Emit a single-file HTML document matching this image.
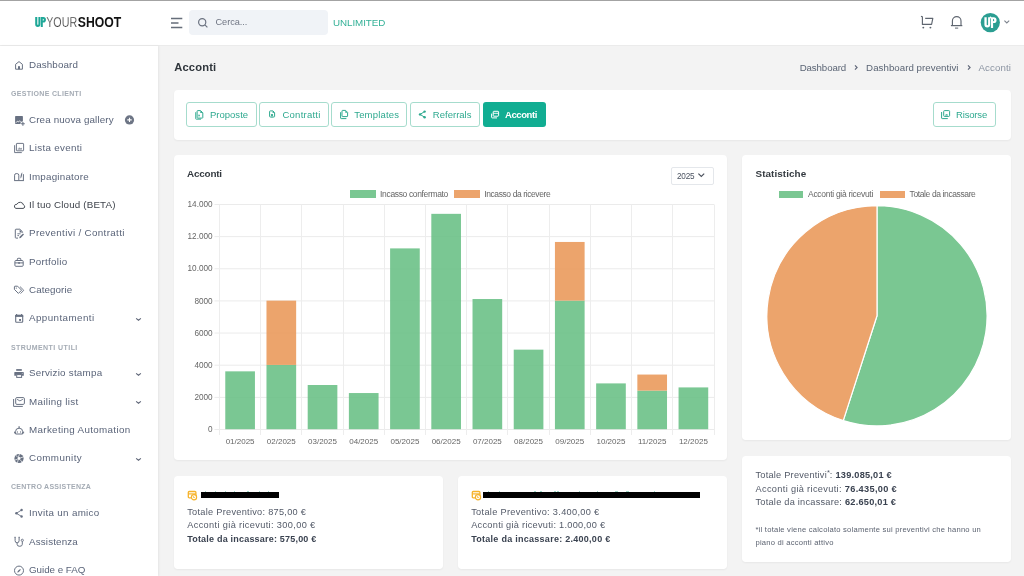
<!DOCTYPE html>
<html><head><meta charset="utf-8"><title>Acconti</title>
<style>
html,body{margin:0;padding:0;}
body{width:1024px;height:576px;overflow:hidden;position:relative;background:#f3f3f3;font-family:"Liberation Sans", sans-serif;}
b{font-weight:700;}
</style></head><body>
<div style="position:absolute;left:0;top:0;width:1024px;height:576px;will-change:transform">
<div style="position:absolute;left:0px;top:0px;width:1024px;height:46px;background:#fff;"></div>
<div style="position:absolute;left:0px;top:0px;width:1024px;height:1px;background:#a3a3a3;"></div>
<div style="position:absolute;left:0px;top:45px;width:1024px;height:1px;background:#ebebeb;"></div>
<svg style="position:absolute;left:30px;top:10px;" width="100" height="22" viewBox="0 0 100 22"><path d="M5.2 6.9H7.3V14.2A0.55 0.55 0 0 0 8.4 14.2V6.9H10.4V14.2A2.6 2.7 0 0 1 5.2 14.2Z" fill="#1ea797"/><path fill-rule="evenodd" d="M10.8 6.9H13.3A2.65 2.8 0 0 1 13.3 12.5H12.8V16.9H10.8Z M12.8 8.7V10.7A1 1 0 0 0 12.8 8.7Z" fill="#1ea797"/><text x="16.2" y="16.9" font-family="Liberation Sans" font-weight="400" font-size="14" fill="#333" stroke="#fff" stroke-width="0.25" textLength="31" lengthAdjust="spacingAndGlyphs">YOUR</text><text x="47.8" y="16.9" font-family="Liberation Sans" font-weight="700" font-size="14" fill="#111" textLength="43.4" lengthAdjust="spacingAndGlyphs">SHOOT</text></svg>
<svg style="position:absolute;left:170px;top:17px;" width="14" height="12" viewBox="0 0 14 12"><path d="M1 1.5H12.3M1 6H8.5M1 10.5H12.3" stroke="#666e7a" stroke-width="1.3" fill="none"/></svg>
<div style="position:absolute;left:189px;top:10px;width:139px;height:25px;background:#f0f3f7;border-radius:4px;"></div>
<svg style="position:absolute;left:197px;top:17px;" width="12" height="12" viewBox="0 0 12 12"><circle cx="5.2" cy="5.2" r="3.6" stroke="#6b7280" stroke-width="1.2" fill="none"/><path d="M7.9 7.9L10.4 10.4" stroke="#6b7280" stroke-width="1.2"/></svg>
<div style="position:absolute;left:215.50px;top:18px;font-size:9.2px;line-height:9.2px;color:#6f7583;font-weight:400;white-space:nowrap;letter-spacing:-0.058px;">Cerca...</div>
<div style="position:absolute;left:333.00px;top:18px;font-size:9.8px;line-height:9.8px;color:#34b197;font-weight:400;white-space:nowrap;letter-spacing:-0.064px;">UNLIMITED</div>
<svg style="position:absolute;left:916px;top:10px;" width="50" height="24" viewBox="0 0 50 24"><path d="M5 6.3L6.4 6.9V14.4H15.6L16.8 8.3H9.2" stroke="#5f6670" stroke-width="1.15" fill="none" stroke-linejoin="round"/><circle cx="7.3" cy="17.6" r="0.95" fill="#5f6670"/><circle cx="14.4" cy="17.6" r="0.95" fill="#5f6670"/><path d="M36.4 15.6V10.9A4.3 4.3 0 0 1 45 10.9V15.6" stroke="#5f6670" stroke-width="1.15" fill="none"/><path d="M34.9 15.6H46.3" stroke="#5f6670" stroke-width="1.2"/><path d="M39 18.1H42.2" stroke="#5f6670" stroke-width="1"/></svg>
<svg style="position:absolute;left:980px;top:12px;" width="21" height="21" viewBox="0 0 21 21"><circle cx="10.3" cy="10.6" r="9.6" fill="#2b9e92"/><path d="M4.4 5.2H6.7V12.6A0.7 0.7 0 0 0 8.1 12.6V5.2H10.2V12.6A2.9 2.9 0 0 1 4.4 12.6Z" fill="#fff"/><path fill-rule="evenodd" d="M10.9 5.2H13.6A2.95 2.95 0 0 1 13.6 11.1H13.1V15.9H10.9Z M13.1 7V9.3A1.15 1.15 0 0 0 13.1 7Z" fill="#fff"/><path d="M10.5 4.6V6.4M9.6 5.4H11.4" stroke="#fff" stroke-width="0.9"/></svg>
<svg style="position:absolute;left:1003px;top:18.5px;" width="8" height="6" viewBox="0 0 8 6"><path d="M1.4 1.7L3.8 4L6.2 1.7" stroke="#7d848e" stroke-width="1.1" fill="none"/></svg>
<div style="position:absolute;left:0px;top:46px;width:158px;height:530px;background:#fff;box-shadow:1px 0 2px rgba(0,0,0,0.06);"></div>
<div style="position:absolute;left:29.00px;top:60px;font-size:9.8px;line-height:9.8px;color:#5a6479;font-weight:400;white-space:nowrap;letter-spacing:0.119px;">Dashboard</div>
<svg style="position:absolute;left:13px;top:59px;" width="13" height="13" viewBox="0 0 13 13"><path d="M2.6 10.2V5.3L6 2.6L9.4 5.3V10.2Z" stroke="#687182" stroke-width="1" fill="none" stroke-linejoin="round"/><rect x="5" y="7.2" width="2" height="3" fill="#687182"/></svg>
<div style="position:absolute;left:29.00px;top:115px;font-size:9.8px;line-height:9.8px;color:#5a6479;font-weight:400;white-space:nowrap;letter-spacing:0.138px;">Crea nuova gallery</div>
<svg style="position:absolute;left:13px;top:114px;" width="13" height="13" viewBox="0 0 13 13"><path d="M2.1 2.6A0.7 0.7 0 0 1 2.8 1.9H9.2A0.7 0.7 0 0 1 9.9 2.6V7.6H8.4V8.3H7.6V9.9H2.8A0.7 0.7 0 0 1 2.1 9.2Z" fill="#687182"/><path d="M3 8.7L4.4 7.2L5.4 8L6.6 6.8L7.6 7.6" stroke="#fff" stroke-width="0.9" fill="none"/><path d="M9.9 7.9V11.8M8 9.8H11.8" stroke="#687182" stroke-width="1.1"/></svg>
<div style="position:absolute;left:29.00px;top:143px;font-size:9.8px;line-height:9.8px;color:#5a6479;font-weight:400;white-space:nowrap;letter-spacing:0.311px;">Lista eventi</div>
<svg style="position:absolute;left:13px;top:142px;" width="13" height="13" viewBox="0 0 13 13"><rect x="3.4" y="1.4" width="7.2" height="7.4" rx="0.6" stroke="#687182" stroke-width="0.95" fill="none"/><path d="M1.6 3.2V10.6H8.8" stroke="#687182" stroke-width="0.95" fill="none"/><path d="M5.3 7.6V6.5M6.3 7.6V5.6M7.3 7.6V6.2M8.3 7.6V5.9" stroke="#687182" stroke-width="0.8"/></svg>
<div style="position:absolute;left:29.00px;top:172px;font-size:9.8px;line-height:9.8px;color:#5a6479;font-weight:400;white-space:nowrap;letter-spacing:0.227px;">Impaginatore</div>
<svg style="position:absolute;left:13px;top:171px;" width="13" height="13" viewBox="0 0 13 13"><path d="M1.6 9.3V4.2A1.6 1.6 0 0 1 3.2 2.6H4.2A1.6 1.6 0 0 1 5.8 4.2V9.3" stroke="#687182" stroke-width="1" fill="none"/><path d="M1.1 9.6H10.9M10.4 3.2V9.6" stroke="#687182" stroke-width="1" fill="none"/><path d="M9.3 1.2C8 2.5 7.4 4.5 7.4 7.6C8.6 6.5 9.2 4.5 9.3 1.2Z" fill="#687182"/></svg>
<div style="position:absolute;left:29.00px;top:200px;font-size:9.8px;line-height:9.8px;color:#3f444c;font-weight:400;white-space:nowrap;letter-spacing:0.156px;">Il tuo Cloud (BETA)</div>
<svg style="position:absolute;left:13px;top:199px;" width="13" height="13" viewBox="0 0 13 13"><path d="M3 9.4H10A1.75 1.75 0 0 0 10.5 6A3.5 3.5 0 0 0 3.9 5.3A2.1 2.1 0 0 0 3 9.4Z" stroke="#4a5059" stroke-width="1" fill="none"/></svg>
<div style="position:absolute;left:29.00px;top:228px;font-size:9.8px;line-height:9.8px;color:#5a6479;font-weight:400;white-space:nowrap;letter-spacing:0.341px;">Preventivi / Contratti</div>
<svg style="position:absolute;left:13px;top:227px;" width="13" height="13" viewBox="0 0 13 13"><path d="M9.6 5.6V4.8L6.8 2.2H3A0.7 0.7 0 0 0 2.3 2.9V10.4A0.7 0.7 0 0 0 3 11.1H5" stroke="#687182" stroke-width="1" fill="none"/><path d="M6.6 2.4V5.4H9.5Z" fill="#687182"/><path d="M4.4 6.8H7.6M4.4 8.6H6" stroke="#687182" stroke-width="0.9"/><path d="M6.3 11.3L6.6 9.8L10 6.5L11 7.5L7.7 10.9Z" fill="#687182"/></svg>
<div style="position:absolute;left:29.00px;top:257px;font-size:9.8px;line-height:9.8px;color:#5a6479;font-weight:400;white-space:nowrap;letter-spacing:0.281px;">Portfolio</div>
<svg style="position:absolute;left:13px;top:256px;" width="13" height="13" viewBox="0 0 13 13"><rect x="1.9" y="4.5" width="8.3" height="5.8" rx="1" stroke="#687182" stroke-width="1" fill="none"/><path d="M4.3 4.5V3.1A0.8 0.8 0 0 1 5.1 2.3H7A0.8 0.8 0 0 1 7.8 3.1V4.5M1.9 6.9H10.2" stroke="#687182" stroke-width="1" fill="none"/><rect x="5.3" y="6.1" width="1.5" height="1.8" fill="#687182"/></svg>
<div style="position:absolute;left:29.00px;top:285px;font-size:9.8px;line-height:9.8px;color:#5a6479;font-weight:400;white-space:nowrap;letter-spacing:0.076px;">Categorie</div>
<svg style="position:absolute;left:13px;top:284px;" width="13" height="13" viewBox="0 0 13 13"><path d="M1.4 2.8A0.6 0.6 0 0 1 2 2.2H4.6L8.6 6.2L5.4 9.4L1.4 5.4Z" stroke="#687182" stroke-width="1" fill="none" stroke-linejoin="round"/><path d="M7 2.6L10.8 6.3L7.5 9.6" stroke="#687182" stroke-width="0.9" fill="none"/><circle cx="3.3" cy="4.1" r="0.6" fill="#687182"/></svg>
<div style="position:absolute;left:29.00px;top:313px;font-size:9.8px;line-height:9.8px;color:#5a6479;font-weight:400;white-space:nowrap;letter-spacing:0.420px;">Appuntamenti</div>
<svg style="position:absolute;left:13px;top:312px;" width="13" height="13" viewBox="0 0 13 13"><rect x="2.7" y="3.3" width="7" height="7" rx="0.7" stroke="#687182" stroke-width="1.1" fill="none"/><rect x="2.2" y="2.9" width="8" height="2" fill="#687182"/><path d="M3.6 1.9V3.2M8.6 1.9V3.2" stroke="#687182" stroke-width="1.1"/><rect x="6.1" y="7" width="1.9" height="1.9" fill="#687182"/></svg>
<div style="position:absolute;left:29.00px;top:368px;font-size:9.8px;line-height:9.8px;color:#5a6479;font-weight:400;white-space:nowrap;letter-spacing:0.242px;">Servizio stampa</div>
<svg style="position:absolute;left:13px;top:367px;" width="13" height="13" viewBox="0 0 13 13"><rect x="3.2" y="2.1" width="5.6" height="1.7" fill="#687182"/><path d="M1.3 5.6A0.6 0.6 0 0 1 1.9 5H10.2A0.6 0.6 0 0 1 10.8 5.6V8.7H9V7.5H3.2V8.7H1.3Z" fill="#687182"/><rect x="3.7" y="7.6" width="4.9" height="2.8" stroke="#687182" stroke-width="1" fill="none"/><circle cx="9.2" cy="6.3" r="0.45" fill="#fff"/></svg>
<div style="position:absolute;left:29.00px;top:397px;font-size:9.8px;line-height:9.8px;color:#5a6479;font-weight:400;white-space:nowrap;letter-spacing:0.314px;">Mailing list</div>
<svg style="position:absolute;left:13px;top:396px;" width="13" height="13" viewBox="0 0 13 13"><rect x="2.7" y="1.6" width="8.7" height="6.8" rx="1.2" stroke="#687182" stroke-width="1" fill="none"/><path d="M4 3.3L6.9 4.9L9.9 3.3" stroke="#687182" stroke-width="0.9" fill="none"/><path d="M0.6 3V10.4H9.8" stroke="#687182" stroke-width="1" fill="none"/></svg>
<div style="position:absolute;left:29.00px;top:425px;font-size:9.8px;line-height:9.8px;color:#5a6479;font-weight:400;white-space:nowrap;letter-spacing:0.338px;">Marketing Automation</div>
<svg style="position:absolute;left:13px;top:424px;" width="13" height="13" viewBox="0 0 13 13"><path d="M6.1 2.2V4.2" stroke="#687182" stroke-width="1.2"/><path d="M2.6 10V7.4A3.5 3.2 0 0 1 9.6 7.4V10Z" stroke="#687182" stroke-width="1" fill="none" stroke-linejoin="round"/><path d="M1.6 7.6V9.4M10.6 7.6V9.4" stroke="#687182" stroke-width="1"/><ellipse cx="4.4" cy="8" rx="0.55" ry="0.8" fill="#687182"/><ellipse cx="7.6" cy="8" rx="0.55" ry="0.8" fill="#687182"/></svg>
<div style="position:absolute;left:29.00px;top:453px;font-size:9.8px;line-height:9.8px;color:#5a6479;font-weight:400;white-space:nowrap;letter-spacing:0.393px;">Community</div>
<svg style="position:absolute;left:13px;top:452px;" width="13" height="13" viewBox="0 0 13 13"><circle cx="6" cy="6.5" r="4.6" fill="#687182"/><circle cx="6" cy="6.5" r="1.4" fill="#fff"/><path d="M6.5 2L5.4 5.2M10.3 5L7.2 5.9M9.2 10.3L7.2 7.7M4.4 10.9L5.2 7.8M1.6 8.2L4.7 7.2M2.6 3L4.8 5.4" stroke="#fff" stroke-width="0.7"/></svg>
<div style="position:absolute;left:29.00px;top:508px;font-size:9.8px;line-height:9.8px;color:#5a6479;font-weight:400;white-space:nowrap;letter-spacing:0.313px;">Invita un amico</div>
<svg style="position:absolute;left:13px;top:507px;" width="13" height="13" viewBox="0 0 13 13"><circle cx="3.4" cy="6.3" r="1.2" fill="#687182"/><circle cx="8.6" cy="3" r="1.2" fill="#687182"/><circle cx="8.6" cy="9.5" r="1.2" fill="#687182"/><path d="M3.4 6.3L8.6 3M3.4 6.3L8.6 9.5" stroke="#687182" stroke-width="0.9"/></svg>
<div style="position:absolute;left:29.00px;top:537px;font-size:9.8px;line-height:9.8px;color:#5a6479;font-weight:400;white-space:nowrap;letter-spacing:0.157px;">Assistenza</div>
<svg style="position:absolute;left:13px;top:536px;" width="13" height="13" viewBox="0 0 13 13"><path d="M2.1 1.4V4.6A2 2.2 0 0 0 6.1 4.6V1.4" stroke="#687182" stroke-width="1" fill="none"/><path d="M4.1 7V8.3A2.6 2 0 0 0 9.3 8.3V5.4" stroke="#687182" stroke-width="1" fill="none"/><circle cx="9.3" cy="4.3" r="1.1" stroke="#687182" stroke-width="0.9" fill="none"/><path d="M1.5 1.4H2.6M5.6 1.4H6.7" stroke="#687182" stroke-width="1.1"/></svg>
<div style="position:absolute;left:29.00px;top:565px;font-size:9.8px;line-height:9.8px;color:#5a6479;font-weight:400;white-space:nowrap;letter-spacing:-0.025px;">Guide e FAQ</div>
<svg style="position:absolute;left:13px;top:564px;" width="13" height="13" viewBox="0 0 13 13"><circle cx="6" cy="6.6" r="4.5" stroke="#687182" stroke-width="1" fill="none"/><path d="M4.2 8.6C4.4 7 5.8 5.5 7.8 5C7.6 6.7 6 8.3 4.2 8.6Z" fill="#687182"/></svg>
<svg style="position:absolute;left:124px;top:115px;" width="11" height="11" viewBox="0 0 11 11"><circle cx="5.5" cy="4.9" r="4.6" fill="#6d7585"/><path d="M5.5 2.7V7.1M3.3 4.9H7.7" stroke="#fff" stroke-width="1.1"/></svg>
<svg style="position:absolute;left:134.5px;top:316px;" width="8" height="6" viewBox="0 0 8 6"><path d="M1.1 2.4L3.5 4.2L5.9 2.4" stroke="#5f6678" stroke-width="1.15" fill="none"/></svg>
<svg style="position:absolute;left:134.5px;top:371px;" width="8" height="6" viewBox="0 0 8 6"><path d="M1.1 2.4L3.5 4.2L5.9 2.4" stroke="#5f6678" stroke-width="1.15" fill="none"/></svg>
<svg style="position:absolute;left:134.5px;top:399px;" width="8" height="6" viewBox="0 0 8 6"><path d="M1.1 2.4L3.5 4.2L5.9 2.4" stroke="#5f6678" stroke-width="1.15" fill="none"/></svg>
<svg style="position:absolute;left:134.5px;top:456px;" width="8" height="6" viewBox="0 0 8 6"><path d="M1.1 2.4L3.5 4.2L5.9 2.4" stroke="#5f6678" stroke-width="1.15" fill="none"/></svg>
<div style="position:absolute;left:10.90px;top:90px;font-size:7.0px;line-height:7.0px;color:#a4abb4;font-weight:700;white-space:nowrap;letter-spacing:0.324px;">GESTIONE CLIENTI</div>
<div style="position:absolute;left:10.90px;top:344px;font-size:7.0px;line-height:7.0px;color:#a4abb4;font-weight:700;white-space:nowrap;letter-spacing:0.438px;">STRUMENTI UTILI</div>
<div style="position:absolute;left:10.90px;top:483px;font-size:7.0px;line-height:7.0px;color:#a4abb4;font-weight:700;white-space:nowrap;letter-spacing:0.276px;">CENTRO ASSISTENZA</div>
<div style="position:absolute;left:158px;top:46px;width:866px;height:530px;background:#f3f3f3;z-index:-1;"></div>
<div style="position:absolute;left:174.20px;top:62px;font-size:11.2px;line-height:11.2px;color:#2f353b;font-weight:700;white-space:nowrap;letter-spacing:0.155px;">Acconti</div>
<div style="position:absolute;left:799.70px;top:63px;font-size:9.7px;line-height:9.7px;color:#5a6474;font-weight:400;white-space:nowrap;letter-spacing:-0.107px;">Dashboard</div>
<svg style="position:absolute;left:853px;top:64px;" width="6" height="7" viewBox="0 0 6 7"><path d="M2 1.3L4.1 3.5L2 5.7" stroke="#5f6678" stroke-width="1.15" fill="none"/></svg>
<div style="position:absolute;left:866.10px;top:63px;font-size:9.7px;line-height:9.7px;color:#5a6474;font-weight:400;white-space:nowrap;letter-spacing:0.044px;">Dashboard preventivi</div>
<svg style="position:absolute;left:965.5px;top:64px;" width="6" height="7" viewBox="0 0 6 7"><path d="M2 1.3L4.1 3.5L2 5.7" stroke="#5f6678" stroke-width="1.15" fill="none"/></svg>
<div style="position:absolute;left:978.50px;top:63px;font-size:9.7px;line-height:9.7px;color:#8b94a2;font-weight:400;white-space:nowrap;letter-spacing:0.115px;">Acconti</div>
<div style="position:absolute;left:174px;top:90px;width:837px;height:50px;background:#fff;border-radius:4px;box-shadow:0 1px 2px rgba(0,0,0,0.05);"></div>
<div style="position:absolute;left:186.4px;top:102px;width:70.29999999999998px;height:25px;border:1px solid #a6dccd;border-radius:3px;box-sizing:border-box;background:#fff;"></div>
<div style="position:absolute;left:209.90px;top:110px;font-size:9.5px;line-height:9.5px;color:#2ea98f;font-weight:400;white-space:nowrap;letter-spacing:0.025px;">Proposte</div>
<svg style="position:absolute;left:188px;top:106px;" width="16" height="16" viewBox="0 0 16 16"><path d="M9.7 4.6H12.6L14.8 6.8V11.5A0.6 0.6 0 0 1 14.2 12.1H9.7A0.6 0.6 0 0 1 9.1 11.5V5.2A0.6 0.6 0 0 1 9.7 4.6Z" stroke="#2ea98f" stroke-width="1" fill="none"/><path d="M7.7 6.2V12.6A0.6 0.6 0 0 0 8.3 13.2H13" stroke="#2ea98f" stroke-width="0.9" fill="none"/><path d="M12.3 4.8V7H14.6Z" fill="#2ea98f"/><path d="M11 8.4V10.6M10.4 9.6H12" stroke="#2ea98f" stroke-width="0.7"/></svg>
<div style="position:absolute;left:259px;top:102px;width:69.60000000000002px;height:25px;border:1px solid #a6dccd;border-radius:3px;box-sizing:border-box;background:#fff;"></div>
<div style="position:absolute;left:282.50px;top:110px;font-size:9.5px;line-height:9.5px;color:#2ea98f;font-weight:400;white-space:nowrap;letter-spacing:0.237px;">Contratti</div>
<svg style="position:absolute;left:264px;top:106px;" width="16" height="16" viewBox="0 0 16 16"><path d="M8.9 4.9H6.2A0.6 0.6 0 0 0 5.6 5.5V10.4A0.6 0.6 0 0 0 6.2 11H7M8.9 4.9L10.6 6.6V10.4A0.6 0.6 0 0 1 10 11H9" stroke="#2ea98f" stroke-width="1" fill="none"/><path d="M8.6 5V7H10.5Z" fill="#2ea98f"/><circle cx="8" cy="9.1" r="1.15" fill="#2ea98f"/><rect x="7.3" y="10.2" width="1.4" height="1.7" fill="#2ea98f"/></svg>
<div style="position:absolute;left:331.3px;top:102px;width:75.69999999999999px;height:25px;border:1px solid #a6dccd;border-radius:3px;box-sizing:border-box;background:#fff;"></div>
<div style="position:absolute;left:354.20px;top:110px;font-size:9.5px;line-height:9.5px;color:#2ea98f;font-weight:400;white-space:nowrap;letter-spacing:0.200px;">Templates</div>
<svg style="position:absolute;left:336px;top:106px;" width="16" height="16" viewBox="0 0 16 16"><path d="M6.6 4.4H9.6L11.6 6.4V10A0.6 0.6 0 0 1 11 10.6H6.6A0.6 0.6 0 0 1 6 10V5A0.6 0.6 0 0 1 6.6 4.4Z" stroke="#2ea98f" stroke-width="1" fill="none"/><path d="M9.3 4.6V6.7H11.4Z" fill="#2ea98f"/><path d="M4.6 6.2V12A0.6 0.6 0 0 0 5.2 12.6H10.4" stroke="#2ea98f" stroke-width="1" fill="none"/></svg>
<div style="position:absolute;left:409.7px;top:102px;width:70.30000000000001px;height:25px;border:1px solid #a6dccd;border-radius:3px;box-sizing:border-box;background:#fff;"></div>
<div style="position:absolute;left:432.80px;top:110px;font-size:9.5px;line-height:9.5px;color:#2ea98f;font-weight:400;white-space:nowrap;letter-spacing:0.020px;">Referrals</div>
<svg style="position:absolute;left:414px;top:106px;" width="16" height="16" viewBox="0 0 16 16"><circle cx="6" cy="8.4" r="1.2" fill="#2ea98f"/><circle cx="10.6" cy="5.6" r="1.2" fill="#2ea98f"/><circle cx="10.6" cy="11.2" r="1.2" fill="#2ea98f"/><path d="M6 8.4L10.6 5.6M6 8.4L10.6 11.2" stroke="#2ea98f" stroke-width="1"/></svg>
<div style="position:absolute;left:483px;top:102px;width:63.299999999999955px;height:25px;background:#11ad92;border-radius:3px;"></div>
<div style="position:absolute;left:505.10px;top:110px;font-size:9.5px;line-height:9.5px;color:#fff;font-weight:700;white-space:nowrap;letter-spacing:-0.440px;">Acconti</div>
<svg style="position:absolute;left:487px;top:106px;" width="16" height="16" viewBox="0 0 16 16"><rect x="6.2" y="5.3" width="5.4" height="4.9" rx="0.6" stroke="#fff" stroke-width="1" fill="none"/><path d="M6.2 7.3H11.6" stroke="#fff" stroke-width="0.9"/><path d="M4.6 7.6V11.3A0.6 0.6 0 0 0 5.2 11.9H10" stroke="#fff" stroke-width="1" fill="none"/></svg>
<div style="position:absolute;left:933px;top:102px;width:62.700000000000045px;height:25px;border:1px solid #a6dccd;border-radius:3px;box-sizing:border-box;background:#fff;"></div>
<div style="position:absolute;left:956.10px;top:110px;font-size:9.5px;line-height:9.5px;color:#2ea98f;font-weight:400;white-space:nowrap;letter-spacing:-0.184px;">Risorse</div>
<svg style="position:absolute;left:938px;top:106px;" width="16" height="16" viewBox="0 0 16 16"><rect x="5.7" y="4.6" width="5.9" height="5.8" rx="0.8" stroke="#2ea98f" stroke-width="1" fill="none"/><path d="M3.6 6V12A0.6 0.6 0 0 0 4.2 12.6H9.8" stroke="#2ea98f" stroke-width="1" fill="none"/><path d="M7.6 9.6V8.6M8.5 9.6V8.1M9.4 9.6V8.4" stroke="#2ea98f" stroke-width="0.8"/></svg>
<div style="position:absolute;left:174px;top:155px;width:553px;height:305px;background:#fff;border-radius:4px;box-shadow:0 1px 2px rgba(0,0,0,0.05);"></div>
<div style="position:absolute;left:187.00px;top:169px;font-size:9.9px;line-height:9.9px;color:#343a40;font-weight:700;white-space:nowrap;letter-spacing:-0.184px;">Acconti</div>
<div style="position:absolute;left:671px;top:167px;width:43px;height:18px;border:1px solid #e4e7eb;border-radius:2px;box-sizing:border-box;"></div>
<div style="position:absolute;left:676.90px;top:173px;font-size:8.2px;line-height:8.2px;color:#4a5260;font-weight:400;white-space:nowrap;letter-spacing:-0.147px;">2025</div>
<svg style="position:absolute;left:696.5px;top:172px;" width="9" height="7" viewBox="0 0 9 7"><path d="M1.4 1.6L4.3 4.5L7.2 1.6" stroke="#4a515c" stroke-width="1.15" fill="none"/></svg>
<div style="position:absolute;left:350px;top:190px;width:26px;height:8px;background:#7ac792;"></div>
<div style="position:absolute;left:380.10px;top:190px;font-size:8.5px;line-height:8.5px;color:#666;font-weight:400;white-space:nowrap;letter-spacing:-0.352px;">Incasso confermato</div>
<div style="position:absolute;left:454.3px;top:190px;width:25.69999999999999px;height:8px;background:#eca46c;"></div>
<div style="position:absolute;left:484.20px;top:190px;font-size:8.5px;line-height:8.5px;color:#666;font-weight:400;white-space:nowrap;letter-spacing:-0.400px;">Incasso da ricevere</div>
<svg style="position:absolute;left:0;top:0" width="1024" height="576"><line x1="214.5" y1="429.50" x2="714" y2="429.50" stroke="#ebebeb" stroke-width="1"/><line x1="214.5" y1="397.36" x2="714" y2="397.36" stroke="#ebebeb" stroke-width="1"/><line x1="214.5" y1="365.21" x2="714" y2="365.21" stroke="#ebebeb" stroke-width="1"/><line x1="214.5" y1="333.07" x2="714" y2="333.07" stroke="#ebebeb" stroke-width="1"/><line x1="214.5" y1="300.93" x2="714" y2="300.93" stroke="#ebebeb" stroke-width="1"/><line x1="214.5" y1="268.79" x2="714" y2="268.79" stroke="#ebebeb" stroke-width="1"/><line x1="214.5" y1="236.64" x2="714" y2="236.64" stroke="#ebebeb" stroke-width="1"/><line x1="214.5" y1="204.50" x2="714" y2="204.50" stroke="#ebebeb" stroke-width="1"/><line x1="219.5" y1="204.5" x2="219.5" y2="435" stroke="#ededed" stroke-width="1"/><line x1="260.5" y1="204.5" x2="260.5" y2="435" stroke="#ededed" stroke-width="1"/><line x1="301.5" y1="204.5" x2="301.5" y2="435" stroke="#ededed" stroke-width="1"/><line x1="343.5" y1="204.5" x2="343.5" y2="435" stroke="#ededed" stroke-width="1"/><line x1="384.5" y1="204.5" x2="384.5" y2="435" stroke="#ededed" stroke-width="1"/><line x1="425.5" y1="204.5" x2="425.5" y2="435" stroke="#ededed" stroke-width="1"/><line x1="466.5" y1="204.5" x2="466.5" y2="435" stroke="#ededed" stroke-width="1"/><line x1="507.5" y1="204.5" x2="507.5" y2="435" stroke="#ededed" stroke-width="1"/><line x1="549.5" y1="204.5" x2="549.5" y2="435" stroke="#ededed" stroke-width="1"/><line x1="590.5" y1="204.5" x2="590.5" y2="435" stroke="#ededed" stroke-width="1"/><line x1="631.5" y1="204.5" x2="631.5" y2="435" stroke="#ededed" stroke-width="1"/><line x1="672.5" y1="204.5" x2="672.5" y2="435" stroke="#ededed" stroke-width="1"/><line x1="714.5" y1="204.5" x2="714.5" y2="435" stroke="#ededed" stroke-width="1"/><rect x="225.27" y="371.34" width="29.67" height="57.86" fill="rgb(108,193,135)" fill-opacity="0.9"/><rect x="266.48" y="364.91" width="29.67" height="64.29" fill="rgb(108,193,135)" fill-opacity="0.9"/><rect x="266.48" y="300.63" width="29.67" height="64.29" fill="rgb(234,154,92)" fill-opacity="0.9"/><rect x="307.69" y="385.00" width="29.67" height="44.20" fill="rgb(108,193,135)" fill-opacity="0.9"/><rect x="348.89" y="393.04" width="29.67" height="36.16" fill="rgb(108,193,135)" fill-opacity="0.9"/><rect x="390.10" y="248.40" width="29.67" height="180.80" fill="rgb(108,193,135)" fill-opacity="0.9"/><rect x="431.31" y="213.84" width="29.67" height="215.36" fill="rgb(108,193,135)" fill-opacity="0.9"/><rect x="472.52" y="299.02" width="29.67" height="130.18" fill="rgb(108,193,135)" fill-opacity="0.9"/><rect x="513.73" y="349.65" width="29.67" height="79.55" fill="rgb(108,193,135)" fill-opacity="0.9"/><rect x="554.94" y="300.63" width="29.67" height="128.57" fill="rgb(108,193,135)" fill-opacity="0.9"/><rect x="554.94" y="241.97" width="29.67" height="58.66" fill="rgb(234,154,92)" fill-opacity="0.9"/><rect x="596.14" y="383.40" width="29.67" height="45.80" fill="rgb(108,193,135)" fill-opacity="0.9"/><rect x="637.35" y="390.63" width="29.67" height="38.57" fill="rgb(108,193,135)" fill-opacity="0.9"/><rect x="637.35" y="374.56" width="29.67" height="16.07" fill="rgb(234,154,92)" fill-opacity="0.9"/><rect x="678.56" y="387.41" width="29.67" height="41.79" fill="rgb(108,193,135)" fill-opacity="0.9"/></svg>
<div style="position:absolute;right:811.40px;top:426px;font-size:8.2px;line-height:8.2px;color:#666;font-weight:400;white-space:nowrap;">0</div>
<div style="position:absolute;right:811.40px;top:394px;font-size:8.2px;line-height:8.2px;color:#666;font-weight:400;white-space:nowrap;">2000</div>
<div style="position:absolute;right:811.40px;top:362px;font-size:8.2px;line-height:8.2px;color:#666;font-weight:400;white-space:nowrap;">4000</div>
<div style="position:absolute;right:811.40px;top:330px;font-size:8.2px;line-height:8.2px;color:#666;font-weight:400;white-space:nowrap;">6000</div>
<div style="position:absolute;right:811.40px;top:298px;font-size:8.2px;line-height:8.2px;color:#666;font-weight:400;white-space:nowrap;">8000</div>
<div style="position:absolute;right:811.40px;top:265px;font-size:8.2px;line-height:8.2px;color:#666;font-weight:400;white-space:nowrap;">10.000</div>
<div style="position:absolute;right:811.40px;top:233px;font-size:8.2px;line-height:8.2px;color:#666;font-weight:400;white-space:nowrap;">12.000</div>
<div style="position:absolute;right:811.40px;top:201px;font-size:8.2px;line-height:8.2px;color:#666;font-weight:400;white-space:nowrap;">14.000</div>
<div style="position:absolute;left:140.10px;width:200px;text-align:center;top:438px;font-size:8.0px;line-height:8.0px;color:#666;font-weight:400;white-space:nowrap;">01/2025</div>
<div style="position:absolute;left:181.31px;width:200px;text-align:center;top:438px;font-size:8.0px;line-height:8.0px;color:#666;font-weight:400;white-space:nowrap;">02/2025</div>
<div style="position:absolute;left:222.52px;width:200px;text-align:center;top:438px;font-size:8.0px;line-height:8.0px;color:#666;font-weight:400;white-space:nowrap;">03/2025</div>
<div style="position:absolute;left:263.73px;width:200px;text-align:center;top:438px;font-size:8.0px;line-height:8.0px;color:#666;font-weight:400;white-space:nowrap;">04/2025</div>
<div style="position:absolute;left:304.94px;width:200px;text-align:center;top:438px;font-size:8.0px;line-height:8.0px;color:#666;font-weight:400;white-space:nowrap;">05/2025</div>
<div style="position:absolute;left:346.15px;width:200px;text-align:center;top:438px;font-size:8.0px;line-height:8.0px;color:#666;font-weight:400;white-space:nowrap;">06/2025</div>
<div style="position:absolute;left:387.35px;width:200px;text-align:center;top:438px;font-size:8.0px;line-height:8.0px;color:#666;font-weight:400;white-space:nowrap;">07/2025</div>
<div style="position:absolute;left:428.56px;width:200px;text-align:center;top:438px;font-size:8.0px;line-height:8.0px;color:#666;font-weight:400;white-space:nowrap;">08/2025</div>
<div style="position:absolute;left:469.77px;width:200px;text-align:center;top:438px;font-size:8.0px;line-height:8.0px;color:#666;font-weight:400;white-space:nowrap;">09/2025</div>
<div style="position:absolute;left:510.98px;width:200px;text-align:center;top:438px;font-size:8.0px;line-height:8.0px;color:#666;font-weight:400;white-space:nowrap;">10/2025</div>
<div style="position:absolute;left:552.19px;width:200px;text-align:center;top:438px;font-size:8.0px;line-height:8.0px;color:#666;font-weight:400;white-space:nowrap;">11/2025</div>
<div style="position:absolute;left:593.40px;width:200px;text-align:center;top:438px;font-size:8.0px;line-height:8.0px;color:#666;font-weight:400;white-space:nowrap;">12/2025</div>
<div style="position:absolute;left:742px;top:155px;width:269px;height:284.5px;background:#fff;border-radius:4px;box-shadow:0 1px 2px rgba(0,0,0,0.05);"></div>
<div style="position:absolute;left:755.50px;top:169px;font-size:9.9px;line-height:9.9px;color:#343a40;font-weight:700;white-space:nowrap;letter-spacing:0.073px;">Statistiche</div>
<div style="position:absolute;left:778.6px;top:190.5px;width:24.899999999999977px;height:7.5px;background:#7ac792;"></div>
<div style="position:absolute;left:808.00px;top:190px;font-size:8.5px;line-height:8.5px;color:#666;font-weight:400;white-space:nowrap;letter-spacing:-0.293px;">Acconti già ricevuti</div>
<div style="position:absolute;left:880.2px;top:190.5px;width:24.799999999999955px;height:7.5px;background:#eca46c;"></div>
<div style="position:absolute;left:909.60px;top:190px;font-size:8.5px;line-height:8.5px;color:#666;font-weight:400;white-space:nowrap;letter-spacing:-0.391px;">Totale da incassare</div>
<svg style="position:absolute;left:0;top:0" width="1024" height="576"><path d="M877 315.8 L877 205.70000000000002 A110.1 110.1 0 1 1 843.27 420.61 Z" fill="#7ac792" stroke="#fff" stroke-width="1.2"/><path d="M877 315.8 L843.27 420.61 A110.1 110.1 0 0 1 877 205.70000000000002 Z" fill="#eca46c" stroke="#fff" stroke-width="1.2"/></svg>
<div style="position:absolute;left:742px;top:456px;width:269px;height:106px;background:#fff;border-radius:4px;box-shadow:0 1px 2px rgba(0,0,0,0.05);"></div>
<div style="position:absolute;left:755.5px;top:471px;font-size:9.2px;line-height:9.2px;color:#525967;white-space:nowrap;letter-spacing:0.237px">Totale Preventivi<span style="font-size:7.5px;position:relative;top:-3.5px;letter-spacing:0">*</span>: <b style="color:#3a4250">139.085,01 €</b></div>
<div style="position:absolute;left:755.5px;top:485px;font-size:9.2px;line-height:9.2px;color:#525967;white-space:nowrap;letter-spacing:0.343px">Acconti già ricevuti: <b style="color:#3a4250">76.435,00 €</b></div>
<div style="position:absolute;left:755.5px;top:498px;font-size:9.2px;line-height:9.2px;color:#525967;white-space:nowrap;letter-spacing:0.246px">Totale da incassare: <b style="color:#3a4250">62.650,01 €</b></div>
<div style="position:absolute;left:755.50px;top:526px;font-size:7.6px;line-height:7.6px;color:#5b6270;font-weight:400;white-space:nowrap;letter-spacing:0.226px;">*il totale viene calcolato solamente sui preventivi che hanno un</div>
<div style="position:absolute;left:755.50px;top:539px;font-size:7.6px;line-height:7.6px;color:#5b6270;font-weight:400;white-space:nowrap;letter-spacing:0.223px;">piano di acconti attivo</div>
<div style="position:absolute;left:174px;top:476px;width:269px;height:93px;background:#fff;border-radius:4px;box-shadow:0 1px 2px rgba(0,0,0,0.05);"></div>
<svg style="position:absolute;left:187.2px;top:489.5px;" width="11" height="11" viewBox="0 0 11 11"><rect x="1.3" y="1.5" width="7.6" height="6.4" rx="0.9" stroke="#f6b32b" stroke-width="1.3" fill="none"/><path d="M1.3 3.9H8.9" stroke="#f6b32b" stroke-width="1.2"/><circle cx="7" cy="7.3" r="2.6" fill="#fff" stroke="#f6b32b" stroke-width="1.2"/><path d="M6.6 6.2V7.6H7.8" stroke="#f6b32b" stroke-width="0.9" fill="none"/></svg>
<div style="position:absolute;left:201.1px;top:491.6px;width:78.00000000000003px;height:6.7999999999999545px;background:#000;"></div>
<div style="position:absolute;left:205.2px;top:491px;width:1.200000000000017px;height:0.6000000000000227px;background:#9fd9c9;"></div>
<div style="position:absolute;left:215.0px;top:491px;width:1.1999999999999886px;height:0.6000000000000227px;background:#9fd9c9;"></div>
<div style="position:absolute;left:225.3px;top:491px;width:1.1999999999999886px;height:0.6000000000000227px;background:#9fd9c9;"></div>
<div style="position:absolute;left:233.5px;top:491px;width:1.1999999999999886px;height:0.6000000000000227px;background:#9fd9c9;"></div>
<div style="position:absolute;left:247.4px;top:491px;width:1.1999999999999886px;height:0.6000000000000227px;background:#9fd9c9;"></div>
<div style="position:absolute;left:258.5px;top:491px;width:1.1999999999999886px;height:0.6000000000000227px;background:#9fd9c9;"></div>
<div style="position:absolute;left:267.5px;top:491px;width:1.1999999999999886px;height:0.6000000000000227px;background:#9fd9c9;"></div>
<div style="position:absolute;left:187.20px;top:508px;font-size:9.2px;line-height:9.2px;color:#525967;font-weight:400;white-space:nowrap;letter-spacing:0.285px;">Totale Preventivo: 875,00 €</div>
<div style="position:absolute;left:187.20px;top:521px;font-size:9.2px;line-height:9.2px;color:#525967;font-weight:400;white-space:nowrap;letter-spacing:0.361px;">Acconti già ricevuti: 300,00 €</div>
<div style="position:absolute;left:187.20px;top:535px;font-size:9.0px;line-height:9.0px;color:#3a4250;font-weight:700;white-space:nowrap;letter-spacing:0.203px;">Totale da incassare: 575,00 €</div>
<div style="position:absolute;left:458px;top:476px;width:269px;height:93px;background:#fff;border-radius:4px;box-shadow:0 1px 2px rgba(0,0,0,0.05);"></div>
<svg style="position:absolute;left:471.2px;top:489.5px;" width="11" height="11" viewBox="0 0 11 11"><rect x="1.3" y="1.5" width="7.6" height="6.4" rx="0.9" stroke="#f6b32b" stroke-width="1.3" fill="none"/><path d="M1.3 3.9H8.9" stroke="#f6b32b" stroke-width="1.2"/><circle cx="7" cy="7.3" r="2.6" fill="#fff" stroke="#f6b32b" stroke-width="1.2"/><path d="M6.6 6.2V7.6H7.8" stroke="#f6b32b" stroke-width="0.9" fill="none"/></svg>
<div style="position:absolute;left:483px;top:491.6px;width:217px;height:6.7999999999999545px;background:#000;"></div>
<div style="position:absolute;left:488.2px;top:491px;width:1.1999999999999886px;height:0.6000000000000227px;background:#9fd9c9;"></div>
<div style="position:absolute;left:498.7px;top:491px;width:1.1999999999999886px;height:0.6000000000000227px;background:#9fd9c9;"></div>
<div style="position:absolute;left:534.4px;top:491px;width:1.2000000000000455px;height:0.6000000000000227px;background:#9fd9c9;"></div>
<div style="position:absolute;left:540.4px;top:491px;width:1.2000000000000455px;height:0.6000000000000227px;background:#9fd9c9;"></div>
<div style="position:absolute;left:554.4px;top:491px;width:1.2000000000000455px;height:0.6000000000000227px;background:#9fd9c9;"></div>
<div style="position:absolute;left:557.4px;top:491px;width:1.2000000000000455px;height:0.6000000000000227px;background:#9fd9c9;"></div>
<div style="position:absolute;left:579.0px;top:491px;width:1.2000000000000455px;height:0.6000000000000227px;background:#9fd9c9;"></div>
<div style="position:absolute;left:596.6px;top:491px;width:1.1999999999999318px;height:0.6000000000000227px;background:#9fd9c9;"></div>
<div style="position:absolute;left:614.6px;top:491px;width:1.1999999999999318px;height:0.6000000000000227px;background:#9fd9c9;"></div>
<div style="position:absolute;left:616.4px;top:491px;width:1.2000000000000455px;height:0.6000000000000227px;background:#9fd9c9;"></div>
<div style="position:absolute;left:625.7px;top:491px;width:1.1999999999999318px;height:0.6000000000000227px;background:#9fd9c9;"></div>
<div style="position:absolute;left:627.4px;top:491px;width:1.2000000000000455px;height:0.6000000000000227px;background:#9fd9c9;"></div>
<div style="position:absolute;left:653.9px;top:491px;width:1.2000000000000455px;height:0.6000000000000227px;background:#9fd9c9;"></div>
<div style="position:absolute;left:471.20px;top:508px;font-size:9.2px;line-height:9.2px;color:#525967;font-weight:400;white-space:nowrap;letter-spacing:0.319px;">Totale Preventivo: 3.400,00 €</div>
<div style="position:absolute;left:471.20px;top:521px;font-size:9.2px;line-height:9.2px;color:#525967;font-weight:400;white-space:nowrap;letter-spacing:0.281px;">Acconti già ricevuti: 1.000,00 €</div>
<div style="position:absolute;left:471.20px;top:535px;font-size:9.0px;line-height:9.0px;color:#3a4250;font-weight:700;white-space:nowrap;letter-spacing:0.270px;">Totale da incassare: 2.400,00 €</div>
</div>
</body></html>
